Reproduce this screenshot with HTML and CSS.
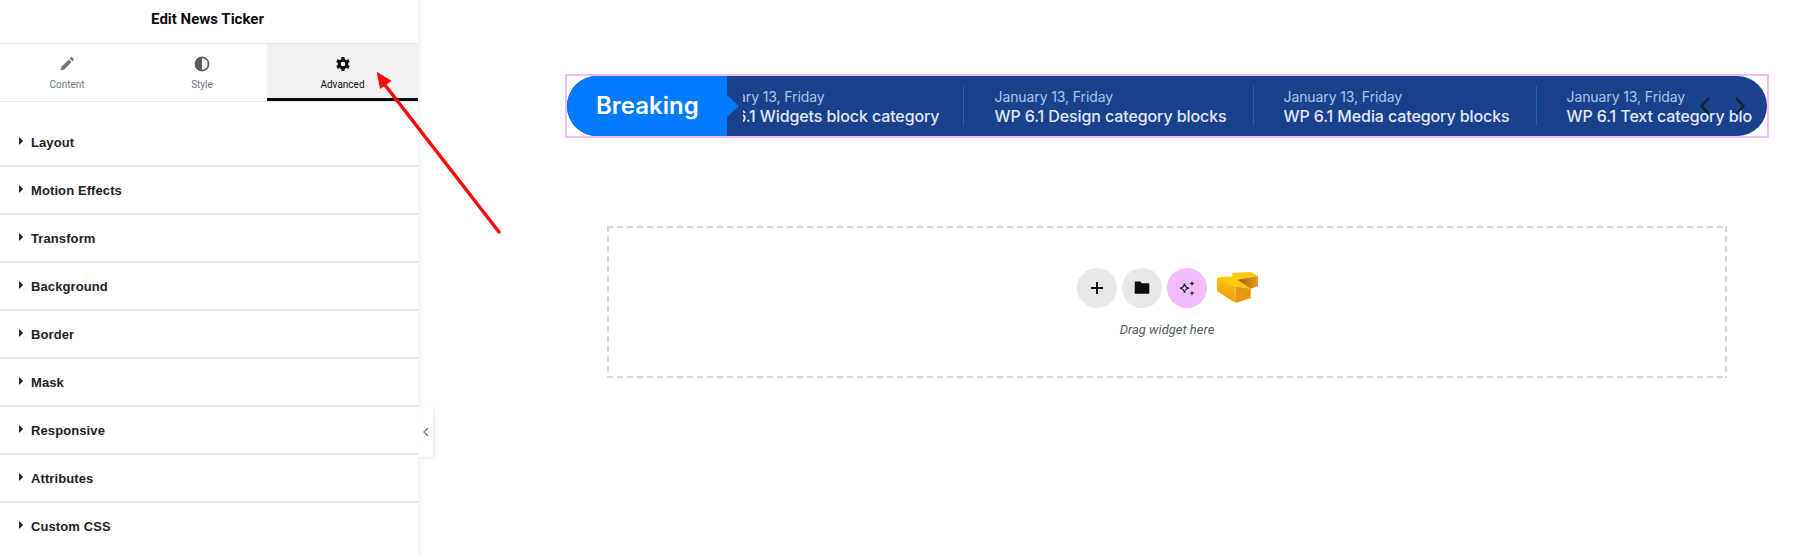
FILE: index.html
```html
<!DOCTYPE html>
<html lang="en">
<head>
<meta charset="utf-8">
<title>Edit News Ticker</title>
<link rel="stylesheet" href="styles.css">
</head>
<body>
<div class="app">
  <aside class="panel">
    <header class="panel-head">Edit News Ticker</header>
    <nav class="tabs">
      <div class="tab tab-content">
        <svg class="tab-icon" viewBox="0 0 16 16"><path fill="#6d7882" d="M11.800 1.400a1 1 0 0 1 1.400 0l1.400 1.400a1 1 0 0 1 0 1.400l-1.200 1.200-2.800-2.800zM9.800 3.400l2.800 2.800-7.400 7.400-3.800 1 1-3.800z"/></svg>
        <span>Content</span>
      </div>
      <div class="tab tab-style">
        <svg class="tab-icon" viewBox="0 0 16 16"><circle cx="8" cy="8" r="6.600" fill="none" stroke="#556068" stroke-width="1.600"/><path fill="#556068" d="M8 1.400a6.600 6.600 0 0 0 0 13.200z"/></svg>
        <span>Style</span>
      </div>
      <div class="tab tab-advanced">
        <svg class="tab-icon" viewBox="0 0 16 16">
          <g fill="none" stroke="#0c0d0e">
            <circle cx="8" cy="8" r="3.800" stroke-width="3"/>
            <path stroke-width="3.200" d="M8 1v2.500M8 12.500V15M2 4.500l2.200 1.300M11.800 10.200 14 11.500M2 11.500l2.200-1.300M11.800 5.800 14 4.500"/>
          </g>
        </svg>
        <span>Advanced</span>
      </div>
    </nav>
    <div class="sections">
      <div class="section"><i class="caret"></i>Layout</div>
      <div class="section"><i class="caret"></i>Motion Effects</div>
      <div class="section"><i class="caret"></i>Transform</div>
      <div class="section"><i class="caret"></i>Background</div>
      <div class="section"><i class="caret"></i>Border</div>
      <div class="section"><i class="caret"></i>Mask</div>
      <div class="section"><i class="caret"></i>Responsive</div>
      <div class="section"><i class="caret"></i>Attributes</div>
      <div class="section section-last"><i class="caret"></i>Custom CSS</div>
    </div>
    <button class="collapse" aria-label="Collapse">
      <svg viewBox="0 0 8 12" class="collapse-icon"><path d="M6 2 2 6l4 4" fill="none" stroke="#6d7882" stroke-width="1.300"/></svg>
    </button>
  </aside>

  <main class="canvas">
    <section class="ticker-wrap">
      <div class="ticker">
        <div class="ticker-label">Breaking</div>
        <div class="ticker-track">
          <div class="ticker-items">
            <article class="item"><div class="date">January 13, Friday</div><div class="title">WP 6.1 Widgets block category</div></article>
            <article class="item"><div class="date">January 13, Friday</div><div class="title">WP 6.1 Design category blocks</div></article>
            <article class="item"><div class="date">January 13, Friday</div><div class="title">WP 6.1 Media category blocks</div></article>
            <article class="item"><div class="date">January 13, Friday</div><div class="title">WP 6.1 Text category blocks</div></article>
          </div>
        </div>
        <div class="ticker-nav">
          <svg viewBox="0 0 10 18" class="nav-icon"><path d="M9 1 1.500 9 9 17" fill="none" stroke="#1a1f2b" stroke-width="2.400"/></svg>
          <svg viewBox="0 0 10 18" class="nav-icon"><path d="M1 1l7.500 8L1 17" fill="none" stroke="#1a1f2b" stroke-width="2.400"/></svg>
        </div>
      </div>
    </section>

    <section class="dropzone">
      <div class="drop-actions">
        <div class="round grey"><svg viewBox="0 0 16 16" class="round-icon"><path d="M8 2v12M2 8h12" stroke="#0c0d0e" stroke-width="2" fill="none"/></svg></div>
        <div class="round grey"><svg viewBox="0 0 16 16" class="round-icon"><path fill="#0c0d0e" d="M1.500 1.500h4.700l1.600 1.700h6.700c.400 0 .800.400.800.800v9c0 .400-.400.800-.800.800H1.500c-.400 0-.800-.400-.800-.800V2.300c0-.400.400-.800.800-.800z"/></svg></div>
        <div class="round pink"><svg viewBox="0 0 16 16" class="round-icon"><path fill="none" stroke="#1a1f2b" stroke-width="1.200" d="M5.500 3.600c.500 3 1.500 4 4.500 4.600-3 .500-4 1.500-4.500 4.600-.500-3-1.500-4-4.500-4.600 3-.500 4-1.500 4.500-4.600z"/><path fill="#1a1f2b" d="M13 .800l.700 2 2 .700-2 .700-.700 2-.700-2-2-.700 2-.700zM13 10.400l.700 2 2 .700-2 .700-.700 2-.700-2-2-.700 2-.700z"/></svg></div>
        <svg viewBox="0 0 41 32" class="logo">
          <defs>
            <linearGradient id="logoFront" x1="0" y1="0" x2="0" y2="1"><stop offset="0" stop-color="#fdbf0a"/><stop offset="1" stop-color="#ee9c12"/></linearGradient>
            <linearGradient id="logoInner" x1="0" y1="0" x2="1" y2="0"><stop offset="0" stop-color="#a85e12"/><stop offset="1" stop-color="#e59a20"/></linearGradient>
          </defs>
          <path fill="#ffcb05" d="M0 5.500 15.300 4.300V1L33.700 0 41 4 20.300 7.700 33.700 16.700 18.700 14.500z"/>
          <path fill="url(#logoInner)" d="M20.300 7.700 41 4v10.300l-7.300 2.400z"/>
          <path fill="url(#logoFront)" d="M0 5.500 18.700 14.500V31L0 19.300z"/>
          <path fill="#e8990f" d="M18.700 14.500 33.700 16.700V26L18.700 31z"/>
        </svg>
      </div>
      <div class="drop-text">Drag widget here</div>
    </section>
  </main>

  <svg class="pointer" viewBox="0 0 140 175" aria-hidden="true">
    <path d="M15 20 L129 167" stroke="#f60a0a" stroke-width="3.500" fill="none" stroke-linecap="round"/>
    <path d="M6.700 6.700 L21.700 16 L10 24 Z" fill="#f60a0a"/>
  </svg>
</div>
</body>
</html>
```
FILE: styles.css
```css
* { box-sizing: border-box; }
html, body { margin: 0; padding: 0; height: 100%; background: #fff; overflow: hidden; }
body { font-family: Roboto, "Liberation Sans", sans-serif; color: #0c0d0e; }

.app { position: relative; display: flex; width: 1813px; height: 557px; }

.panel {
  position: relative;
  flex: 0 0 418px;
  height: 557px;
  background: #fff;
  box-shadow: 1px 0 6px rgba(0, 0, 0, 0.08);
  z-index: 2;
}
.panel-head {
  height: 44px;
  border-bottom: 1px solid #e6e8ea;
  display: flex;
  align-items: center;
  justify-content: center;
  font-size: 15px;
  font-weight: 700;
  padding: 0 3px 6px 0;
}
.tabs { display: flex; height: 58px; border-bottom: 1px solid #e6e8ea; }
.tab {
  display: flex;
  flex-direction: column;
  align-items: center;
  padding-top: 12px;
  font-size: 10px;
  color: #6d7882;
}
.tab-content { width: 134px; }
.tab-style { width: 133px; padding-left: 3px; }
.tab-advanced {
  width: 151px;
  background: #f1f2f3;
  color: #0c0d0e;
  border-bottom: 3px solid #0c0d0e;
}
.tab-icon { width: 16px; height: 16px; margin-bottom: 7px; }

.sections { padding-top: 17px; }
.section {
  height: 48px;
  border-bottom: 2px solid #e6e8ea;
  display: flex;
  align-items: center;
  padding-left: 19px;
  font-family: "Liberation Sans", Arial, sans-serif;
  font-size: 13px;
  font-weight: 700;
  color: #1f2124;
  letter-spacing: 0.1px;
}
.section-last { border-bottom: 0; padding-bottom: 2px; }
.caret {
  width: 0;
  height: 0;
  border-left: 4px solid #1f2124;
  border-top: 4px solid transparent;
  border-bottom: 4px solid transparent;
  margin-right: 8px;
  margin-bottom: 2px;
}
.collapse {
  position: absolute;
  left: 418px;
  top: 407px;
  width: 15px;
  height: 50px;
  padding: 0;
  border: 0;
  background: #fff;
  box-shadow: 2px 1px 4px rgba(0, 0, 0, 0.08);
  display: flex;
  align-items: center;
  justify-content: center;
}
.collapse-icon { width: 8px; height: 12px; }

.canvas { flex: 1; position: relative; }
.ticker-wrap { margin: 74px 0 0 147px; width: 1204px; height: 64px; border: 2px solid #f0bdfb; }
.ticker {
  position: relative;
  display: flex;
  height: 60px;
  background: #1a418c;
  border-radius: 30px;
}
.ticker-label {
  position: relative;
  flex: 0 0 160px;
  background: #007bff;
  border-radius: 30px 0 0 30px;
  color: #fff;
  font-family: Inter, sans-serif;
  font-size: 24px;
  font-weight: 600;
  display: flex;
  align-items: center;
  padding: 0 0 2px 29px;
}
.ticker-label::after {
  content: "";
  position: absolute;
  left: 160px;
  top: 19px;
  border-left: 12px solid #007bff;
  border-top: 11px solid transparent;
  border-bottom: 11px solid transparent;
}
.ticker-track { flex: 1; min-width: 0; margin: 0 15px 0 16px; overflow: hidden; font-family: Inter, sans-serif; }
.ticker-items { display: flex; margin-left: -37px; height: 100%; align-items: center; }
.item {
  flex: none;
  height: 40px;
  padding: 0 26px 0 30px;
  border-right: 1px solid #2563b8;
}
.item:first-child { padding: 0 24px 0 0; }
.item:last-child { border-right: 0; }
.date { font-size: 14px; line-height: 20px; color: #a9c4e8; white-space: nowrap; letter-spacing: -0.1px; padding-top: 1px; }
.title { font-size: 16px; line-height: 19px; font-weight: 500; color: #e0e8f5; white-space: nowrap; letter-spacing: -0.1px; }
.ticker-nav {
  position: absolute;
  right: 22px;
  top: 21px;
  display: flex;
  gap: 25px;
}
.nav-icon { width: 10px; height: 18px; }

.dropzone {
  position: absolute;
  left: 189px;
  top: 226px;
  width: 1120px;
  height: 152px;
  background-image:
    linear-gradient(to right, #d5d8dc 6px, transparent 6px),
    linear-gradient(to right, #d5d8dc 6px, transparent 6px),
    linear-gradient(to bottom, #d5d8dc 6px, transparent 6px),
    linear-gradient(to bottom, #d5d8dc 6px, transparent 6px);
  background-size: 10px 2px, 10px 2px, 2px 10px, 2px 10px;
  background-position: 0 0, 0 100%, 0 0, 100% 0;
  background-repeat: repeat-x, repeat-x, repeat-y, repeat-y;
  display: flex;
  flex-direction: column;
  align-items: center;
  padding-top: 42px;
}
.drop-actions { display: flex; align-items: center; gap: 5px; }
.round { width: 40px; height: 40px; border-radius: 50%; display: flex; align-items: center; justify-content: center; }
.grey { background: #e6e8ea; }
.pink { background: #f3bdfd; }
.round-icon { width: 16px; height: 16px; }
.logo { width: 41px; height: 32px; margin-left: 5px; }
.drop-text { margin-top: 14px; font-size: 13px; font-style: italic; color: #556068; }

.pointer { position: absolute; left: 370px; top: 65px; width: 140px; height: 175px; z-index: 3; }
```
